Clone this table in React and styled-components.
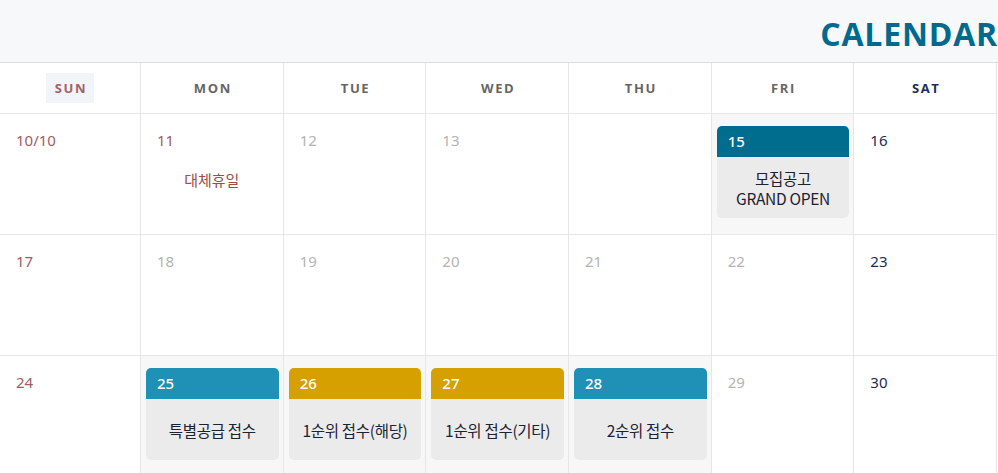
import React from "react";
import styled, { createGlobalStyle } from "styled-components";

const GlobalStyle = createGlobalStyle`
    body {
        margin: 0;
        background: #fff;
        font-family: "Noto Sans", "Noto Sans CJK KR", sans-serif;
    }
`;

const days = ["SUN", "MON", "TUE", "WED", "THU", "FRI", "SAT"];

const weeks = [
    [
        { n: "10/10", tone: "sun" },
        { n: "11", tone: "sun", holiday: "대체휴일" },
        { n: "12" },
        { n: "13" },
        { n: "" },
        { n: "15", event: { color: "#006d8f", lines: ["모집공고", "GRAND OPEN"] } },
        { n: "16", tone: "sat" },
    ],
    [
        { n: "17", tone: "sun" },
        { n: "18" },
        { n: "19" },
        { n: "20" },
        { n: "21" },
        { n: "22" },
        { n: "23", tone: "sat" },
    ],
    [
        { n: "24", tone: "sun" },
        { n: "25", event: { color: "#1f91b6", lines: ["특별공급 접수"] } },
        { n: "26", event: { color: "#d5a000", lines: ["1순위 접수(해당)"] } },
        { n: "27", event: { color: "#d5a000", lines: ["1순위 접수(기타)"] } },
        { n: "28", event: { color: "#1f91b6", lines: ["2순위 접수"] } },
        { n: "29" },
        { n: "30", tone: "sat" },
    ],
];

const tones = {
    sun: "#9e5d63",
    sat: "#1a2c56",
    day: "#b3b3b3",
};

const App = () => {
    return (
        <Page>
            <GlobalStyle />
            <TopBar>
                <Title>CALENDAR</Title>
            </TopBar>
            <Grid>
                {days.map((d, i) => (
                    <HeadCell key={d}>
                        <DayName $sun={i === 0} $sat={i === 6}>
                            {d}
                        </DayName>
                    </HeadCell>
                ))}
                {weeks.map((week, w) =>
                    week.map((c, i) => (
                        <Cell key={w + "-" + i} $filled={!!c.event}>
                            {c.event ? (
                                <Card>
                                    <CardHead $color={c.event.color}>{c.n}</CardHead>
                                    <CardBody>
                                        {c.event.lines.map((l) => (
                                            <span key={l}>{l}</span>
                                        ))}
                                    </CardBody>
                                </Card>
                            ) : (
                                <>
                                    <Num $tone={c.tone || "day"}>{c.n}</Num>
                                    {c.holiday && <Holiday>{c.holiday}</Holiday>}
                                </>
                            )}
                        </Cell>
                    ))
                )}
            </Grid>
        </Page>
    );
};

const Page = styled.div`
    width: 998px;
    height: 473px;
    overflow: hidden;
`;

const TopBar = styled.div`
    box-sizing: border-box;
    height: 63px;
    background: #f7f8fa;
    border-bottom: 1px solid #dcdcdc;
    display: flex;
    align-items: center;
    justify-content: flex-end;
`;

const Title = styled.h1`
    margin: 0;
    padding-top: 4px;
    font-family: "Open Sans", sans-serif;
    font-weight: 700;
    font-size: 32px;
    letter-spacing: 0.8px;
    color: #006a8e;
`;

const Grid = styled.div`
    width: 997px;
    display: grid;
    grid-template-columns: 141px repeat(6, 1fr);
    grid-template-rows: 51px;
    grid-auto-rows: 121px;
`;

const HeadCell = styled.div`
    border-right: 1px solid #e6e6e6;
    border-bottom: 1px solid #e6e6e6;
    display: flex;
    align-items: center;
    justify-content: center;
`;

const DayName = styled.span`
    font-family: "Open Sans", sans-serif;
    font-weight: 700;
    font-size: 13px;
    letter-spacing: 1.6px;
    padding: 6px 7px 6px 9px;
    line-height: 18px;
    color: ${(p) => (p.$sun ? "#a0636a" : p.$sat ? "#1c2f55" : "#666")};
    background: ${(p) => (p.$sun ? "#f3f4f8" : "transparent")};
`;

const Cell = styled.div`
    border-right: 1px solid #e6e6e6;
    border-bottom: 1px solid #e6e6e6;
    background: ${(p) => (p.$filled ? "#f7f7f7" : "#fff")};
    display: flex;
    flex-direction: column;
    padding: ${(p) => (p.$filled ? "12px 4px 0 5px" : "15px 16px 0")};
`;

const Num = styled.div`
    font-size: 15px;
    line-height: 22px;
    color: ${(p) => tones[p.$tone]};
`;

const Holiday = styled.div`
    margin-top: 18px;
    text-align: center;
    font-family: "Noto Sans CJK KR", sans-serif;
    font-size: 15px;
    line-height: 22px;
    color: #a3484c;
`;

const Card = styled.div`
    border-radius: 5px;
    overflow: hidden;
    background: #ebebeb;
    height: 92px;
    display: flex;
    flex-direction: column;
`;

const CardHead = styled.div`
    height: 31px;
    background: ${(p) => p.$color};
    color: #fff;
    font-size: 15px;
    font-weight: 500;
    line-height: 30px;
    padding-left: 11px;
`;

const CardBody = styled.div`
    flex: 1;
    display: flex;
    flex-direction: column;
    align-items: center;
    justify-content: center;
    font-family: "Noto Sans CJK KR", sans-serif;
    font-size: 15.5px;
    line-height: 20px;
    letter-spacing: -0.3px;
    color: #1b2232;
`;

export default App;
